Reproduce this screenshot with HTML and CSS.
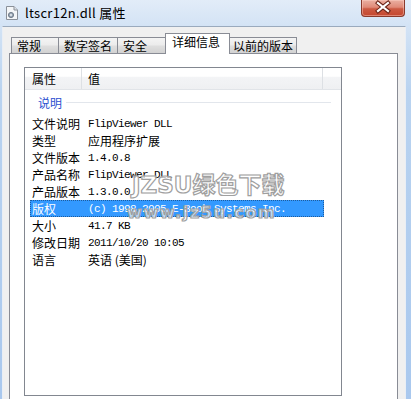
FILE: index.html
```html
<!DOCTYPE html>
<html lang="zh-CN">
<head>
<meta charset="utf-8">
<title>ltscr12n.dll 属性</title>
<link rel="stylesheet" href="styles.css">
</head>
<body>
<div class="window">
  <div class="titlebar">
    <svg class="appicon" width="12" height="14" viewBox="0 0 12 14">
      <path d="M0.5 0.5 H8 L11.5 4 V13.5 H0.5 Z" fill="#f4f6f8" stroke="#8a9099"/>
      <path d="M8 0.5 V4 H11.5" fill="#dfe3e8" stroke="#8a9099"/>
      <circle cx="5" cy="9" r="2.6" fill="#9aa7b6" stroke="#5f6b79" stroke-width="0.8"/>
      <circle cx="5" cy="9" r="0.9" fill="#f4f6f8"/>
    </svg>
    <span class="title">ltscr12n.dll 属性</span>
    <div class="close">
      <svg width="44" height="17" viewBox="0 0 44 17">
        <path d="M17 4 L27 12 M27 4 L17 12" stroke="#6b2418" stroke-width="4.2" stroke-linecap="square"/>
        <path d="M17 4 L27 12 M27 4 L17 12" stroke="#ffffff" stroke-width="2.2" stroke-linecap="square"/>
      </svg>
    </div>
  </div>
  <div class="client">
    <div class="tabs">
      <div class="tab t1">常规</div>
      <div class="tab t2">数字签名</div>
      <div class="tab t3">安全</div>
      <div class="tab t4 selected">详细信息</div>
      <div class="tab t5">以前的版本</div>
    </div>
    <div class="page">
      <div class="list">
        <div class="header">
          <div class="hcol hname">属性</div>
          <div class="hcol hval">值</div>
          <div class="hcol hrest"></div>
        </div>
        <div class="group"><span class="gtext">说明</span><span class="gline"></span></div>
        <div class="row"><span class="name">文件说明</span><span class="val mono">FlipViewer DLL</span></div>
        <div class="row"><span class="name">类型</span><span class="val">应用程序扩展</span></div>
        <div class="row"><span class="name">文件版本</span><span class="val mono">1.4.0.8</span></div>
        <div class="row"><span class="name">产品名称</span><span class="val mono">FlipViewer DLL</span></div>
        <div class="row"><span class="name">产品版本</span><span class="val mono">1.3.0.0</span></div>
        <div class="row active"><span class="name">版权</span><span class="val mono">(c) 1998-2005 E-Book Systems Inc.</span></div>
        <div class="row"><span class="name">大小</span><span class="val mono">41.7 KB</span></div>
        <div class="row"><span class="name">修改日期</span><span class="val mono">2011/10/20 10:05</span></div>
        <div class="row"><span class="name">语言</span><span class="val">英语 (美国)</span></div>
        <div class="watermark">
          <div class="wm1">JZSU绿色下载</div>
          <div class="wm2">www.jz5u.com</div>
        </div>
      </div>
    </div>
  </div>
</div>
</body>
</html>
```
FILE: styles.css
```css
html, body {
  margin: 0;
  padding: 0;
  width: 411px;
  height: 399px;
  overflow: hidden;
}

body {
  font-family: "Noto Sans CJK SC", "Noto Sans", sans-serif;
  font-size: 12px;
  color: #000;
}

.window {
  width: 411px;
  height: 399px;
  display: flex;
  flex-direction: column;
  background: linear-gradient(to bottom, #e2ecf8 0, #d3e3f5 26px, #b9d3f0 90px, #a9c8ee 399px);
}

.titlebar {
  height: 26px;
  flex: none;
  display: flex;
  align-items: flex-start;
  padding-left: 6px;
}

.appicon {
  margin-top: 6px;
  flex: none;
}

.title {
  margin-left: 7px;
  margin-top: 4px;
  font-size: 13px;
  line-height: 17px;
  letter-spacing: 0.3px;
  color: #000;
}

.close {
  margin-left: auto;
  margin-right: 6px;
  width: 44px;
  height: 17px;
  box-sizing: border-box;
  border: 1px solid #8a3a2c;
  border-top: none;
  border-radius: 0 0 4px 4px;
  background: linear-gradient(to bottom, #eab0a2 0, #e08a78 45%, #cc5a43 55%, #c4472f 100%);
  box-shadow: inset 0 0 0 1px rgba(255, 210, 200, 0.45);
}

.close svg {
  display: block;
  margin: -1px 0 0 -1px;
}

.client {
  flex: 1;
  margin: 0 5px 0 2px;
  border-top: 1px solid #9aaabd;
  border-left: 1px solid #e9eef5;
  border-right: 1px solid #e9eef5;
  background: #f0f0f0;
  padding: 6px 7px 0 6px;
  display: flex;
  flex-direction: column;
  min-height: 0;
}

.tabs {
  height: 20px;
  flex: none;
  display: flex;
  align-items: flex-end;
  padding-left: 2px;
}

.tab {
  box-sizing: border-box;
  height: 16px;
  border: 1px solid #898c95;
  border-bottom: none;
  background: linear-gradient(to bottom, #f4f4f4 0, #ececec 45%, #dedede 55%, #d2d2d2 100%);
  line-height: 15px;
  padding-left: 5px;
  white-space: nowrap;
  margin-left: -1px;
}

.t1 { width: 48px; margin-left: 0; }
.t2 { width: 60px; }
.t3 { width: 49px; }
.t4 { width: 65px; }
.t5 { width: 68px; padding-left: 3px; }

.tab.selected {
  height: 21px;
  margin-bottom: -1px;
  background: #fff;
  position: relative;
  z-index: 1;
  padding-left: 6px;
}

.page {
  flex: 1;
  background: #fff;
  border: 1px solid #898c95;
  border-bottom: none;
  padding: 13px 55px 0 14px;
}

.list {
  position: relative;
  height: 329px;
  box-sizing: border-box;
  border: 1px solid #828790;
  background: #fff;
  overflow: hidden;
}

.header {
  height: 22px;
  box-sizing: border-box;
  display: flex;
  background: linear-gradient(to bottom, #ffffff 0, #ffffff 40%, #f3f4f6 42%, #eff0f2 100%);
  border-bottom: 1px solid #e1e4e8;
}

.hcol {
  box-sizing: border-box;
  line-height: 21px;
  border-right: 1px solid #dde0e4;
}

.hname { width: 57px; padding-left: 7px; }
.hval { width: 241px; padding-left: 6px; }
.hrest { width: 17px; border-right: none; }

.group {
  height: 25px;
  display: flex;
  align-items: center;
  padding-left: 13px;
  padding-right: 10px;
}

.gtext {
  color: #2c4fd0;
  line-height: 16px;
}

.gline {
  flex: 1;
  height: 1px;
  background: #e2e6ec;
  margin-left: 4px;
}

.row {
  height: 17px;
  width: 294px;
  margin-left: 5px;
  display: flex;
  align-items: center;
  white-space: nowrap;
  box-sizing: border-box;
}

.name {
  width: 58px;
  padding-left: 2px;
  box-sizing: border-box;
  flex: none;
}

.val {
  flex: none;
}

.mono {
  font-family: "Liberation Mono", "DejaVu Sans Mono", monospace;
  font-size: 11px;
  letter-spacing: -0.6px;
}

.row.active {
  background: #3399ff;
  color: #fff;
  outline: 1px dotted #1f5c9c;
  outline-offset: -1px;
}

.watermark {
  position: absolute;
  left: 102px;
  top: 104px;
  pointer-events: none;
  font-family: "DejaVu Sans", "Noto Sans CJK SC", sans-serif;
  font-weight: bold;
  color: rgba(255, 255, 255, 0.7);
  -webkit-text-stroke: 1.2px #a0a0a0;
}

.wm1 {
  font-size: 23px;
  line-height: 26px;
  padding-left: 5px;
  letter-spacing: 0;
}

.wm2 {
  font-size: 16px;
  line-height: 18px;
  margin-top: 6px;
  letter-spacing: 1.6px;
}
```
